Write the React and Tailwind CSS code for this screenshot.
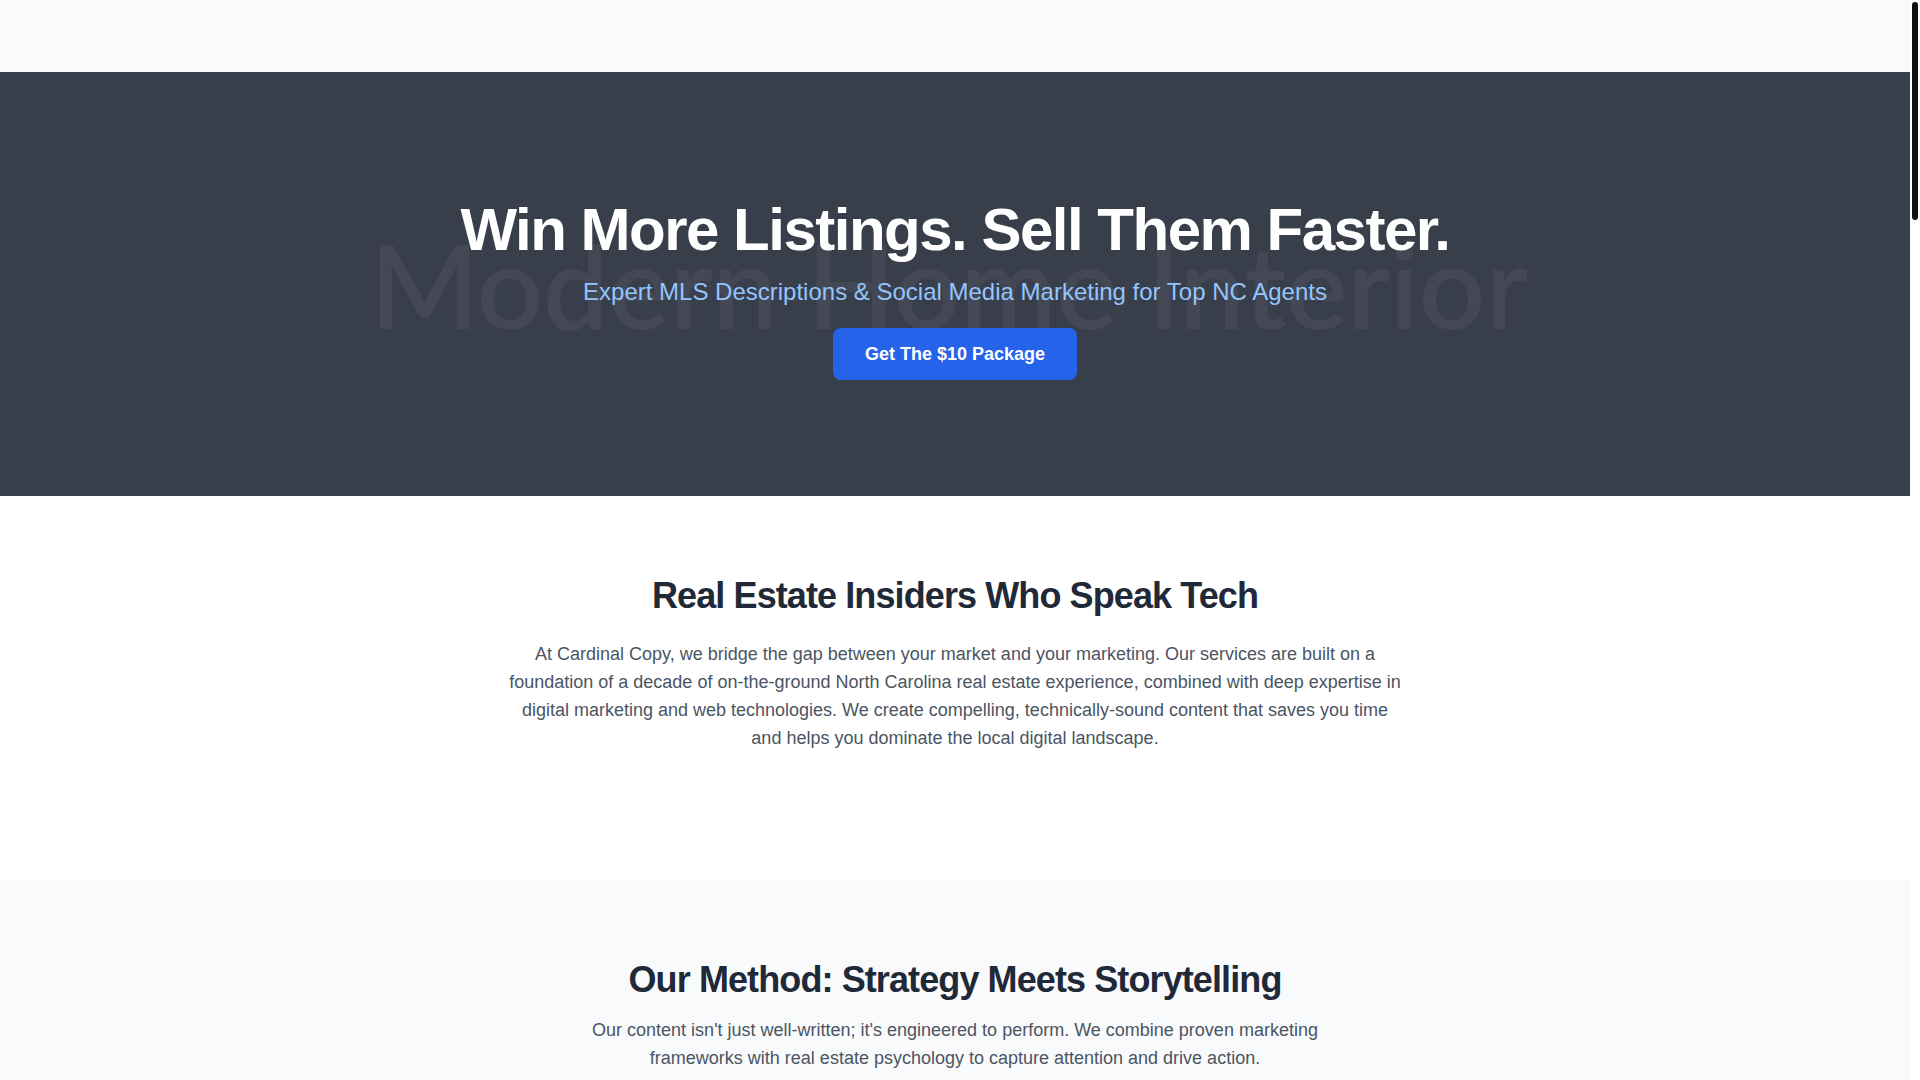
export default function App() {
  return (
    <div className="h-screen flex overflow-hidden bg-white font-['Liberation_Sans',Arial,sans-serif]">
      <main className="flex-1 min-w-0 overflow-hidden">
        <header className="h-[72px] bg-[#f9fafb]"></header>

        <section className="relative overflow-hidden bg-[#393e4b] pt-[128px] pb-[116px] text-center">
          <div className="absolute inset-x-0 top-[155px] flex justify-center pointer-events-none select-none">
            <span className="-ml-3 font-['Lato',sans-serif] font-semibold text-[116px] leading-none text-white/[0.05] whitespace-nowrap">Modern Home Interior</span>
          </div>
          <div className="relative">
            <h1 className="text-6xl font-bold tracking-tight text-white leading-none mb-4">Win More Listings. Sell Them Faster.</h1>
            <p className="text-2xl text-[#93c5fd] mb-5">Expert MLS Descriptions &amp; Social Media Marketing for Top NC Agents</p>
            <a href="#" className="inline-block bg-[#2563eb] text-white text-lg font-bold px-8 py-3 rounded-lg">Get The $10 Package</a>
          </div>
        </section>

        <section className="bg-white pt-20 pb-32 text-center">
          <h2 className="text-4xl font-bold tracking-tight text-[#1f2937] mb-6">Real Estate Insiders Who Speak Tech</h2>
          <p className="max-w-4xl mx-auto text-lg text-[#4b5563]">
            At Cardinal Copy, we bridge the gap between your market and your marketing. Our services are built on a foundation of a decade of on-the-ground North Carolina real estate experience, combined with deep expertise in digital marketing and web technologies. We create compelling, technically-sound content that saves you time and helps you dominate the local digital landscape.
          </p>
        </section>

        <section className="bg-[#f9fafb] pt-20 pb-24 text-center">
          <h2 className="text-4xl font-bold tracking-tight text-[#1f2937] mb-4">Our Method: Strategy Meets Storytelling</h2>
          <p className="max-w-3xl mx-auto text-lg text-[#4b5563]">
            Our content isn't just well-written; it's engineered to perform. We combine proven marketing frameworks with real estate psychology to capture attention and drive action.
          </p>
        </section>
      </main>

      {/* scrollbar */}
      <aside className="w-[10px] shrink-0 bg-white pt-[2px]">
        <div className="ml-[2px] w-[6px] h-[218px] rounded-full bg-[#111]"></div>
      </aside>
    </div>
  )
}
